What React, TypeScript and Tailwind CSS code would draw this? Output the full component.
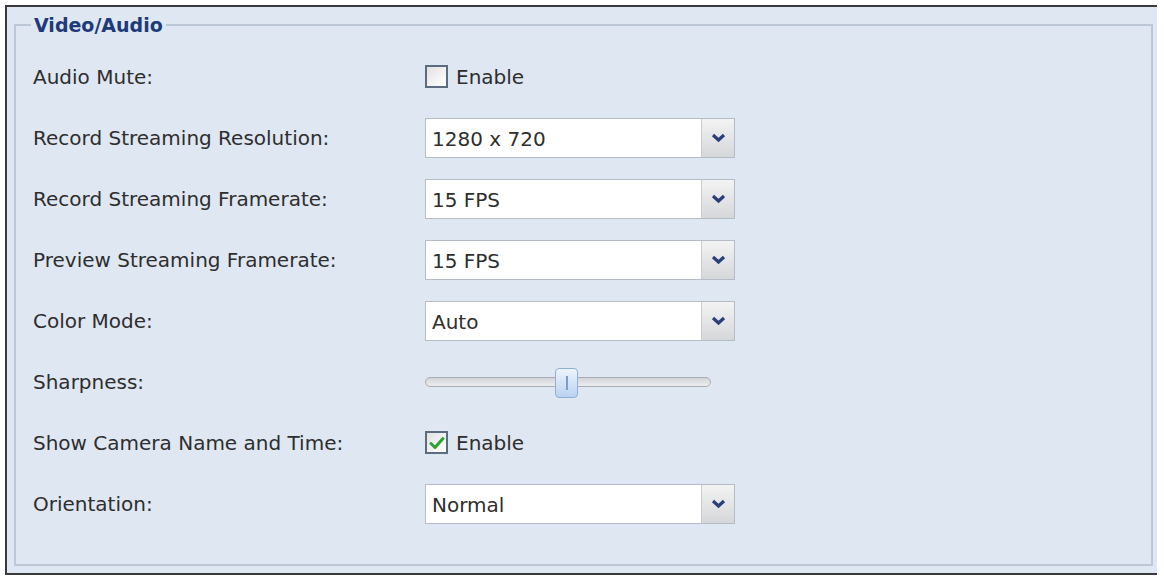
import React from "react";

type Row =
  | { label: string; kind: "check"; checked: boolean }
  | { label: string; kind: "select"; value: string }
  | { label: string; kind: "slider"; value: number };

const rows: Row[] = [
  { label: "Audio Mute:", kind: "check", checked: false },
  { label: "Record Streaming Resolution:", kind: "select", value: "1280 x 720" },
  { label: "Record Streaming Framerate:", kind: "select", value: "15 FPS" },
  { label: "Preview Streaming Framerate:", kind: "select", value: "15 FPS" },
  { label: "Color Mode:", kind: "select", value: "Auto" },
  { label: "Sharpness:", kind: "slider", value: 0.5 },
  { label: "Show Camera Name and Time:", kind: "check", checked: true },
  { label: "Orientation:", kind: "select", value: "Normal" },
];

function Checkbox({ checked }: { checked: boolean }) {
  return (
    <div className="flex items-center gap-[8px]">
      <div className="w-[23px] h-[23px] border-2 border-[#5b6b80] bg-gradient-to-br from-[#e2e2e2] to-white flex items-center justify-center">
        {checked && (
          <svg width="16" height="14" viewBox="0 0 16 14">
            <path d="M2 7.5 L6 11.5 L14 2.5" fill="none" stroke="#2fa034" strokeWidth="3" strokeLinecap="round" strokeLinejoin="round" />
          </svg>
        )}
      </div>
      <span>Enable</span>
    </div>
  );
}

function Select({ value }: { value: string }) {
  return (
    <div className="flex w-[310px] h-[40px] border border-[#b5bcc6] bg-white">
      <div className="flex-1 flex items-center pl-[6px] pt-[3px]">{value}</div>
      <div className="w-[33px] border-l border-[#c8cdd3] bg-gradient-to-b from-[#f3f3f3] to-[#d6d7da] flex items-center justify-center">
        <svg width="15" height="10" viewBox="0 0 15 10">
          <path d="M2 2 L7.5 7 L13 2" fill="none" stroke="#2a3f7a" strokeWidth="3.2" />
        </svg>
      </div>
    </div>
  );
}

function Slider({ value }: { value: number }) {
  return (
    <div className="relative w-[286px] h-[30px] flex items-center">
      <div className="w-full h-[10px] rounded-full border border-[#a9adb3] bg-gradient-to-b from-[#d2d4d7] to-[#eceef0]" />
      <div
        className="absolute top-[1px] w-[23px] h-[30px] rounded-[4px] border border-[#8fb0d8] bg-gradient-to-b from-[#eef5fd] to-[#b9d2f0] flex items-center justify-center"
        style={{ left: `${value * 286 - 13}px` }}
      >
        <div className="w-[2px] h-[14px] bg-[#7d9cc6]" />
      </div>
    </div>
  );
}

export default function App() {
  return (
    <div className="w-[1164px] h-[576px] bg-white pt-[5px] pl-[5px] font-['DejaVu_Sans',sans-serif] text-[20px] text-[#2e2e2e]">
      <div className="w-[1152px] h-[570px] border-t-2 border-l-2 border-b-2 border-t-[#3a3a3a] border-l-[#3a3a3a] border-b-[#3a3a3a] bg-[#dfe7f3] pt-[7px] pl-[7px]">
        <fieldset className="w-[1139px] h-[552px] border-2 border-[#bcc8d6] pl-[17px] pt-[10px]">
          <legend className="-ml-[2px] px-[3px] font-bold text-[#1d3b7a] text-[19px] leading-[22px]">
            Video/Audio
          </legend>
          {rows.map((r) => (
            <div key={r.label} className="flex items-center h-[61px]">
              <div className="w-[392px] pt-[1px]">{r.label}</div>
              {r.kind === "check" && <Checkbox checked={r.checked} />}
              {r.kind === "select" && <Select value={r.value} />}
              {r.kind === "slider" && <Slider value={r.value} />}
            </div>
          ))}
        </fieldset>
      </div>
    </div>
  );
}
